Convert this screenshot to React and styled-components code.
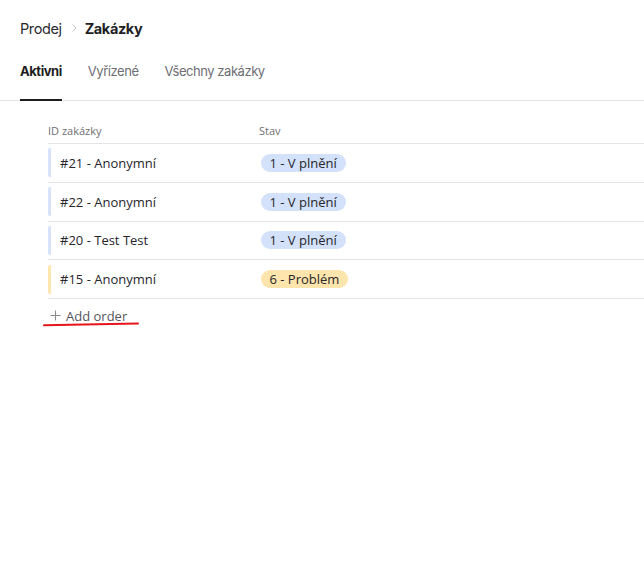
import React from 'react';
import styled, { createGlobalStyle } from 'styled-components';

const GlobalStyle = createGlobalStyle`
  html, body {
    margin: 0;
    padding: 0;
    background: #fff;
  }
  body {
    font-family: Inter, 'Noto Sans', sans-serif;
    color: #1d1d22;
  }
`;

const orders = [
  { id: 21, name: 'Anonymní', status: '1 - V plnění', tone: 'blue' },
  { id: 22, name: 'Anonymní', status: '1 - V plnění', tone: 'blue' },
  { id: 20, name: 'Test Test', status: '1 - V plnění', tone: 'blue' },
  { id: 15, name: 'Anonymní', status: '6 - Problém', tone: 'yellow' },
];

const tones = {
  blue: { bar: '#d6e3fb', bg: '#d3e1fa' },
  yellow: { bar: '#fde6b0', bg: '#fde5ad' },
};

export default function App() {
  return (
    <Page>
      <GlobalStyle />
      <Breadcrumb>
        <Crumb>Prodej</Crumb>
        <Chevron viewBox="0 0 8 10" aria-hidden="true">
          <path d="M2.5 1.5 L6 5 L2.5 8.5" fill="none" stroke="#c4c4c8" strokeWidth="1" />
        </Chevron>
        <Current>Zakázky</Current>
      </Breadcrumb>
      <Tabs>
        <Tab $active>Aktivni</Tab>
        <Tab>Vyřízené</Tab>
        <Tab>Všechny zakázky</Tab>
      </Tabs>
      <Table>
        <HeadRow>
          <HeadCell>ID zakázky</HeadCell>
          <HeadCell>Stav</HeadCell>
        </HeadRow>
        {orders.map((o) => (
          <Row key={o.id}>
            <IdCell $tone={o.tone}>
              #{o.id} - {o.name}
            </IdCell>
            <StatusCell>
              <Badge $tone={o.tone}>{o.status}</Badge>
            </StatusCell>
          </Row>
        ))}
        <AddRow>
          <AddButton>
            <PlusIcon viewBox="0 0 12 12" aria-hidden="true">
              <path d="M6 0.5 V11.5 M0.5 6 H11.5" stroke="#8a8a8f" strokeWidth="1.2" />
            </PlusIcon>
            Add order
          </AddButton>
          <Scribble viewBox="0 0 96 6" aria-hidden="true">
            <path d="M1 4.2 L95 2.4" fill="none" stroke="#e8141c" strokeWidth="2" strokeLinecap="round" />
          </Scribble>
        </AddRow>
      </Table>
    </Page>
  );
}

const Page = styled.div`
  width: 644px;
  min-height: 569px;
  background: #fff;
`;

const Breadcrumb = styled.div`
  display: flex;
  align-items: center;
  height: 56px;
  padding: 0 20px;
  font-size: 14.5px;
  letter-spacing: -0.4px;
`;

const Crumb = styled.span`
  color: #2a2a30;
`;

const Chevron = styled.svg`
  width: 8px;
  height: 10px;
  margin: 0 7px 0 8px;
`;

const Current = styled.span`
  font-weight: 700;
  color: #1f1f25;
`;

const Tabs = styled.div`
  display: flex;
  gap: 26px;
  padding: 0 20px;
  border-bottom: 1px solid #e4e4e6;
`;

const Tab = styled.div`
  position: relative;
  height: 45px;
  line-height: 31px;
  font-size: 13px;
  letter-spacing: -0.45px;
  font-weight: ${(p) => (p.$active ? 700 : 400)};
  color: ${(p) => (p.$active ? '#1d1d22' : '#6e6e74')};
  border-bottom: 2px solid ${(p) => (p.$active ? '#1d1d22' : 'transparent')};
  margin-bottom: -1px;
  box-sizing: border-box;
`;

const Table = styled.div`
  padding: 16px 0 0 48px;
  font-family: 'Open Sans', 'Noto Sans', sans-serif;
`;

const HeadRow = styled.div`
  display: grid;
  grid-template-columns: 211px 1fr;
  height: 26px;
  align-items: center;
  border-bottom: 1px solid #e4e4e6;
`;

const HeadCell = styled.div`
  font-size: 11px;
  color: #707076;
`;

const Row = styled.div`
  display: grid;
  grid-template-columns: 211px 1fr;
  height: 37.75px;
  align-items: center;
  border-bottom: 1px solid #e4e4e6;
`;

const IdCell = styled.div`
  display: flex;
  align-items: center;
  height: 29px;
  padding-left: 9px;
  font-size: 13px;
  color: #26262b;
  border-left: 3px solid ${(p) => tones[p.$tone].bar};
  border-radius: 2px;
  box-sizing: border-box;
`;

const StatusCell = styled.div`
  display: flex;
  align-items: center;
  padding-left: 2px;
`;

const Badge = styled.span`
  display: inline-flex;
  align-items: center;
  height: 18px;
  padding: 0 9px 0 8.5px;
  border-radius: 9px;
  font-size: 13px;
  color: #26262b;
  background: ${(p) => tones[p.$tone].bg};
`;

const AddRow = styled.div`
  position: relative;
  padding-top: 5px;
`;

const AddButton = styled.button`
  display: inline-flex;
  align-items: center;
  gap: 5px;
  padding: 0 0 0 2px;
  border: 0;
  background: none;
  font-family: 'Open Sans', 'Noto Sans', sans-serif;
  font-size: 13px;
  color: #55555b;
  cursor: pointer;
`;

const PlusIcon = styled.svg`
  width: 11px;
  height: 11px;
`;

const Scribble = styled.svg`
  position: absolute;
  left: -5px;
  top: 22px;
  width: 96px;
  height: 6px;
`;
